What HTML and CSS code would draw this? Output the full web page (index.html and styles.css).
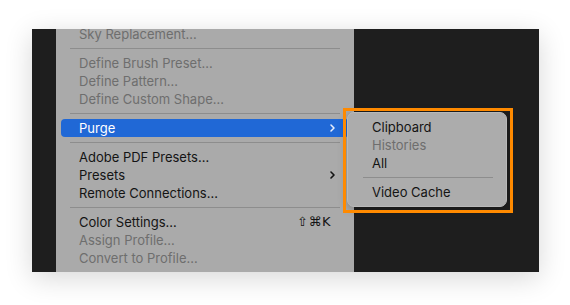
FILE: index.html
```html
<!DOCTYPE html>
<html lang="en">
<head>
<meta charset="utf-8">
<title>Edit menu – Purge</title>
<link rel="stylesheet" href="styles.css">
</head>
<body>
<div class="stage">
  <div class="panel">
    <div class="menu">
      <ul class="menu-list">
        <li class="item disabled">Sky Replacement…</li>
        <li class="sep"></li>
        <li class="item disabled">Define Brush Preset…</li>
        <li class="item disabled">Define Pattern…</li>
        <li class="item disabled">Define Custom Shape…</li>
        <li class="sep"></li>
        <li class="item active">Purge
          <svg class="chev" width="5" height="8" viewBox="0 0 5 8"><polyline points="1,1 4,4 1,7" fill="none" stroke="currentColor" stroke-width="1.5" stroke-linecap="round" stroke-linejoin="round"/></svg>
        </li>
        <li class="sep"></li>
        <li class="item">Adobe PDF Presets…</li>
        <li class="item">Presets
          <svg class="chev" width="5" height="8" viewBox="0 0 5 8"><polyline points="1,1 4,4 1,7" fill="none" stroke="currentColor" stroke-width="1.6" stroke-linecap="round" stroke-linejoin="round"/></svg>
        </li>
        <li class="item">Remote Connections…</li>
        <li class="sep"></li>
        <li class="item">Color Settings… <span class="shortcut">⇧⌘K</span></li>
        <li class="item disabled">Assign Profile…</li>
        <li class="item disabled">Convert to Profile…</li>
      </ul>
    </div>
    <div class="submenu">
      <ul class="menu-list">
        <li class="item">Clipboard</li>
        <li class="item disabled">Histories</li>
        <li class="item">All</li>
        <li class="sep"></li>
        <li class="item">Video Cache</li>
      </ul>
    </div>
    <div class="highlight-box"></div>
  </div>
</div>
</body>
</html>
```
FILE: styles.css
```css
html, body {
  margin: 0;
  padding: 0;
  background: #ffffff;
}

body {
  font-family: "Inter", "DejaVu Sans", sans-serif;
  font-size: 13px;
  -webkit-font-smoothing: antialiased;
}

.stage {
  padding: 29px 31px 33px 32px;
}

.panel {
  position: relative;
  width: 507px;
  height: 243px;
  background: #1e1e1e;
  box-shadow: 0 6px 26px rgba(0, 0, 0, 0.16);
  overflow: hidden;
  display: flex;
}

.menu {
  margin-left: 24px;
  width: 298px;
  background: #aaaaaa;
}

.menu-list {
  list-style: none;
  margin: 0;
  padding: 0;
}

.menu > .menu-list {
  margin-top: -4.5px;
}

.item {
  height: 18px;
  line-height: 18px;
  padding: 0 23px 0 23px;
  color: #141414;
  display: flex;
  align-items: center;
  justify-content: space-between;
  white-space: nowrap;
}

.item.disabled {
  color: #6e6e6e;
}

.item.active {
  margin: 0 5px;
  padding: 0 18px 0 18px;
  background: #2068d6;
  color: #ffffff;
  border-radius: 4px;
}

.chev {
  margin-right: -4px;
  display: block;
}

.item.active .chev {
  color: #e8eefb;
}

.shortcut {
  font-family: "DejaVu Sans", sans-serif;
  font-size: 13px;
  letter-spacing: 0.5px;
}

.sep {
  box-sizing: border-box;
  height: 11px;
  padding: 5px 14px 0 14px;
}

.sep::after {
  content: "";
  display: block;
  height: 1px;
  background: #8d8d8d;
}

.submenu {
  position: absolute;
  left: 315px;
  top: 83px;
  width: 160px;
  height: 95px;
  box-sizing: border-box;
  padding-top: 5px;
  background: #acacac;
  border: 1px solid #b9b9b9;
  border-radius: 7px;
  box-shadow: 0 2px 10px rgba(0, 0, 0, 0.25);
}

.submenu .item {
  padding-left: 24px;
}

.submenu .sep {
  padding: 5px 13px 0 15px;
}

.highlight-box {
  position: absolute;
  left: 311px;
  top: 79px;
  width: 170px;
  height: 105px;
  box-sizing: border-box;
  border: 3px solid #ff8a00;
}
```
